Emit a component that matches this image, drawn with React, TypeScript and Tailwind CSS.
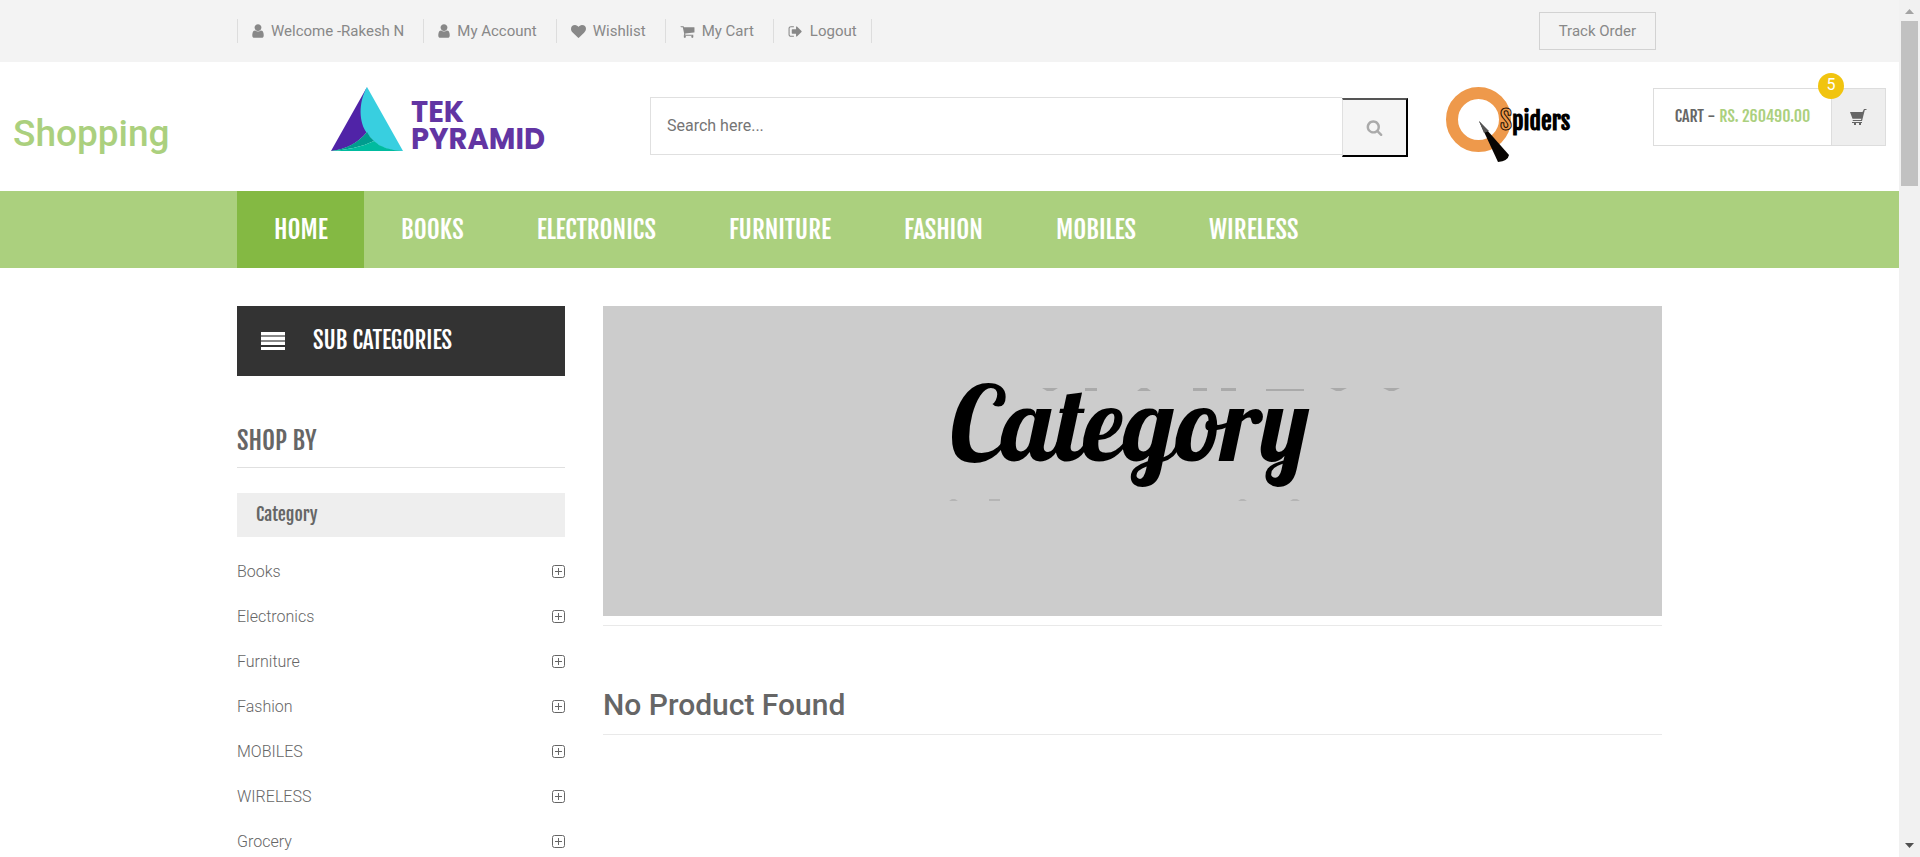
import type { ReactNode } from "react";

const HEADING = "font-['Fjalla_One','Roboto_Condensed','Liberation_Sans_Narrow',Roboto,sans-serif]";

function Glyph({ d, box = "0 0 1792 1792", className }: { d: string; box?: string; className: string }) {
  return (
    <svg viewBox={box} className={className} fill="currentColor" aria-hidden="true">
      <path d={d} />
    </svg>
  );
}

const USER =
  "M1280 1399q0 109-62.5 187t-150.5 78h-854q-88 0-150.5-78t-62.5-187q0-85 8.5-160.5t31.5-152 58.5-131 94-89 134.5-34.5q131 128 313 128t313-128q76 0 134.5 34.5t94 89 58.5 131 31.5 152 8.5 160.5zm-256-887q0 159-112.5 271.5t-271.5 112.5-271.5-112.5-112.5-271.5 112.5-271.5 271.5-112.5 271.5 112.5 112.5 271.5z";
const HEART =
  "M896 1664q-26 0-44-18l-624-602q-10-8-27.5-26t-55.5-65.5-68-97.5-53.5-121-23.5-138q0-220 127-344t351-124q62 0 126.5 21.5t120 58 95.5 68.5 76 68q36-36 76-68t95.5-68.5 120-58 126.5-21.5q224 0 351 124t127 344q0 221-229 450l-623 600q-18 18-44 18z";
const CART =
  "M704 1536q0 52-38 90t-90 38-90-38-38-90 38-90 90-38 90 38 38 90zm896 0q0 52-38 90t-90 38-90-38-38-90 38-90 90-38 90 38 38 90zm128-1088v512q0 24-16.5 42.5t-40.5 21.5l-1044 122q13 60 13 70 0 16-24 64h920q26 0 45 19t19 45-19 45-45 19h-1024q-26 0-45-19t-19-45q0-11 8-31.5t16-36 21.5-40 15.5-29.5l-177-823h-204q-26 0-45-19t-19-45 19-45 45-19h256q16 0 28.5 6.5t19.5 15.5 13 24.5 8 26 5.5 29.5 4.5 26h1201q26 0 45 19t19 45z";
const LOGOUT =
  "M704 1440q0 4 1 20t.5 26.5-3 23.5-10 19.5-20.5 6.5h-320q-119 0-203.5-84.5t-84.5-203.5v-704q0-119 84.5-203.5t203.5-84.5h320q13 0 22.5 9.5t9.5 22.5q0 4 1 20t.5 26.5-3 23.5-10 19.5-20.5 6.5h-320q-66 0-113 47t-47 113v704q0 66 47 113t113 47h312l11.5 1 11.5 3 8 5.5 7 9 2 13.5zm928-544q0 26-19 45l-544 544q-19 19-45 19t-45-19-19-45v-288h-448q-26 0-45-19t-19-45v-384q0-26 19-45t45-19h448v-288q0-26 19-45t45-19 45 19l544 544q19 19 19 45z";
const SEARCH =
  "M1216 832q0-185-131.5-316.5t-316.5-131.5-316.5 131.5-131.5 316.5 131.5 316.5 316.5 131.5 316.5-131.5 131.5-316.5zm512 832q0 52-38 90t-90 38q-54 0-90-38l-343-342q-179 124-399 124-143 0-273.5-55.5t-225-150-150-225-55.5-273.5 55.5-273.5 150-225 225-150 273.5-55.5 273.5 55.5 225 150 150 225 55.5 273.5q0 220-124 399l343 343q37 37 37 90z";

function TopLink({ icon, children }: { icon: ReactNode; children: ReactNode }) {
  return (
    <li className="border-r border-[#dddddd] pr-[19px] last:pr-3.5">
      <a href="#" className="flex h-6 items-center gap-[7px] pl-3.5">
        {icon}
        {children}
      </a>
    </li>
  );
}

function TopBar() {
  return (
    <div className="h-[62px] bg-[#f3f3f3] text-[15px] text-[#888888]">
      <div className="mx-auto flex h-full w-[1425px] max-w-full items-center justify-between">
        <ul className="flex border-l border-[#dddddd]">
          <TopLink icon={<Glyph d={USER} box="0 0 1280 1792" className="h-4 w-3" />}>Welcome -Rakesh N</TopLink>
          <TopLink icon={<Glyph d={USER} box="0 0 1280 1792" className="h-4 w-3" />}>My Account</TopLink>
          <TopLink icon={<Glyph d={HEART} className="size-[15px]" />}>Wishlist</TopLink>
          <TopLink icon={<Glyph d={CART} className="size-[15px]" />}>My Cart</TopLink>
          <TopLink icon={<Glyph d={LOGOUT} className="size-[15px]" />}>Logout</TopLink>
        </ul>
        <a href="#" className="mr-1.5 flex h-[38px] items-center border border-[#d2d2d2] px-[19px]">
          Track Order
        </a>
      </div>
    </div>
  );
}

function TekPyramid() {
  return (
    <span className="mt-[25px] flex items-start gap-2">
      <svg viewBox="0 0 72 64" className="h-16 w-[72px]" aria-hidden="true">
        <path d="M36 0L0 64Q22 62 36 45Q29 20 36 0Z" fill="#5023a7" />
        <path d="M36 0C27 16 28 36 36 46Q47 64 72 64Z" fill="#38cfe0" />
        <path d="M0 64Q23 61 36 45Q39 51 43 54Q27 62 0 64Z" fill="#009c8e" />
        <path d="M0 64Q27 62 43 54Q52 63 72 64Z" fill="#00bb9f" />
      </svg>
      <span className="mt-3 flex flex-col font-[Poppins,Inter,sans-serif] text-[29px] leading-[27px] font-bold text-[#6235a3]">
        <span>TEK</span>
        <span>PYRAMID</span>
      </span>
    </span>
  );
}

function QSpiders() {
  return (
    <svg viewBox="0 0 126 78" className="mt-6 h-[78px] w-[126px] overflow-visible" role="img" aria-label="QSpiders">
      <circle cx="32.500" cy="33.500" r="26.500" fill="none" stroke="#ee994b" strokeWidth="12" />
      <path d="M33 35L63 69Q62 75 52 76Z" fill="#080503" />
      <path d="M33 35L43 45L38 47Z" fill="#555" />
      <text
        x="54"
        y="44"
        fontSize="26"
        fill="#000"
        fontFamily="'Fjalla One', 'Roboto Condensed', 'Liberation Sans Narrow', sans-serif"
      >
        <tspan fill="none" stroke="#1a0d00">
          S
        </tspan>
        <tspan fontSize="24" fontWeight="700">
          piders
        </tspan>
      </text>
    </svg>
  );
}

function Header() {
  return (
    <header className="grid h-[129px] grid-cols-[318px_319px_minmax(0,1fr)_245px_233px] items-start px-[13px]">
      <h1 className="mt-[50px] text-[37px] leading-[44px] font-medium text-[#abd07e]">Shopping</h1>
      <a href="#" aria-label="Tek Pyramid">
        <TekPyramid />
      </a>
      <form className="mt-[35px] flex items-start" role="search">
        <input
          type="search"
          aria-label="Search"
          placeholder="Search here..."
          className="h-[58px] min-w-0 flex-1 border border-r-0 border-[#e0e0e0] px-4 pb-0.5 text-base outline-none placeholder:text-[#757575]"
        />
        <button
          type="button"
          aria-label="Search"
          className="mt-px flex h-[59px] w-[66px] items-center justify-center border-2 border-l border-t-[#555] border-r-black border-b-black border-l-[#e0e0e0] bg-[#f5f5f5] text-[#aaaaaa]"
        >
          <Glyph d={SEARCH} className="size-[17px]" />
        </button>
      </form>
      <a href="#" className="pl-[38px]">
        <QSpiders />
      </a>
      <button
        type="button"
        className={`relative mt-[26px] flex h-[58px] border border-[#dddddd] text-base font-medium text-[#666666] ${HEADING}`}
      >
        <span className="flex h-full flex-1 items-center justify-center gap-1 pb-0.5">
          CART - <span className="text-[#abd07e]">RS. 260490.00</span>
        </span>
        <span className="flex h-full w-[54px] items-center justify-center border-l border-[#dddddd] bg-[#eeeeee]">
          <svg viewBox="0 0 17 17" className="size-[17px]" aria-hidden="true">
            <path d="M0 3H12.500L14 0H16.500V1H14.800L12 12H3L2.500 11H11L11.400 9.800H2.500Z" fill="#666" />
            <path d="M2 13H12V14H2ZM4 14H6V16H4ZM9 14H11V16H9Z" fill="#666" />
          </svg>
        </span>
        <span className="absolute -top-4 right-[41px] flex size-[26px] items-center justify-center rounded-full bg-[#f1c40f] pb-0.5 font-[Roboto,sans-serif] text-base font-normal text-white">
          5
        </span>
      </button>
    </header>
  );
}

const NAV = ["HOME", "BOOKS", "ELECTRONICS", "FURNITURE", "FASHION", "MOBILES", "WIRELESS"];

function Nav() {
  return (
    <nav className="bg-[#abd07e]">
      <ul className={`mx-auto flex w-[1425px] max-w-full text-[25px] font-medium text-white ${HEADING}`}>
        {NAV.map((label, i) => (
          <li key={label}>
            <a href="#" className={`flex h-[77px] items-center pr-9 pl-[37px] ${i === 0 ? "bg-[#84b943]" : ""}`}>
              {label}
            </a>
          </li>
        ))}
      </ul>
    </nav>
  );
}

const CATEGORIES = ["Books", "Electronics", "Furniture", "Fashion", "MOBILES", "WIRELESS", "Grocery"];

function Sidebar() {
  return (
    <aside className="w-[328px] shrink-0">
      <div className={`flex h-[70px] items-center gap-7 bg-[#333333] pl-6 text-[23px] font-medium text-white ${HEADING}`}>
        <svg viewBox="0 0 24 18" className="h-[18px] w-6" fill="#fff" aria-hidden="true">
          <path d="M0 0H24V13H0Z" fill="#888" />
          <path d="M0 0H24V3H0ZM0 5H24V8H0ZM0 10H24V13H0ZM0 15H24V18H0Z" />
        </svg>
        SUB CATEGORIES
      </div>
      <h3 className={`mt-12 border-b border-[#e0e0e0] pb-2.5 text-[25px] leading-[33px] text-[#666666] ${HEADING}`}>
        SHOP BY
      </h3>
      <h4 className={`mt-[25px] flex h-11 items-center bg-[#eeeeee] pb-0.5 pl-[19px] text-lg font-medium text-[#666666] ${HEADING}`}>
        Category
      </h4>
      <ul className="mt-3">
        {CATEGORIES.map((label) => (
          <li key={label}>
            <a href="#" className="flex h-[45px] items-center justify-between text-base font-light text-[#666666]">
              {label}
              <svg viewBox="0 0 13 13" className="size-[13px]" fill="none" stroke="#666" aria-hidden="true">
                <rect x=".5" y=".5" width="12" height="12" rx="2" />
                <path d="M6.500 3V10M3 6.500H10" />
              </svg>
            </a>
          </li>
        ))}
      </ul>
    </aside>
  );
}

function Banner() {
  return (
    <svg viewBox="0 0 1059 310" className="block w-full bg-[#cccccc]" role="img" aria-label="Category">
      <text x="347" y="155" fontSize="104" fontFamily="'Brush Script MT', Lobster, 'Liberation Serif', serif">
        Category
      </text>
      <g fill="#aaaaaa">
        <path d="M439 82H455L450 85H444ZM482 82H494V85H482ZM534 85L538 82H544L548 85ZM590 82H604V85H590ZM618 82H633V85H618ZM663 83H701V85H663ZM727 82H744L738 85H733ZM780 82H797L791 85H786Z" />
        <path d="M346 195L349 193H352L355 195ZM386 193H397V195H386ZM635 195L638 193H641L644 195ZM687 195L690 193H694L697 195Z" fill="#b5b5b5" />
      </g>
    </svg>
  );
}

function ScrollBar() {
  return (
    <div className="flex w-[21px] shrink-0 flex-col items-center justify-between bg-[#f1f1f1]" aria-hidden="true">
      <div className="flex flex-col items-center">
        <svg viewBox="0 0 21 21" className="size-[21px]">
          <path d="M6 14L10.500 9L15 14Z" fill="#a3a3a3" />
        </svg>
        <div className="h-[165px] w-[17px] bg-[#c1c1c1]" />
      </div>
      <svg viewBox="0 0 21 21" className="size-[21px]">
        <path d="M6 7L10.500 12L15 7Z" fill="#505050" />
      </svg>
    </div>
  );
}

export default function App() {
  return (
    <div className="flex h-screen bg-white font-[Roboto,sans-serif]">
      <div className="min-w-0 flex-1 overflow-hidden">
        <TopBar />
        <Header />
        <Nav />
        <div className="mx-auto mt-[38px] flex w-[1425px] max-w-full items-start gap-[38px]">
          <Sidebar />
          <main className="min-w-0 flex-1">
            <Banner />
            <h2 className="mt-[9px] border-y border-[#e9e9e9] pt-[61px] pb-[11px] text-[30px] leading-9 font-medium text-[#666666]">
              No Product Found
            </h2>
          </main>
        </div>
      </div>
      <ScrollBar />
    </div>
  );
}
